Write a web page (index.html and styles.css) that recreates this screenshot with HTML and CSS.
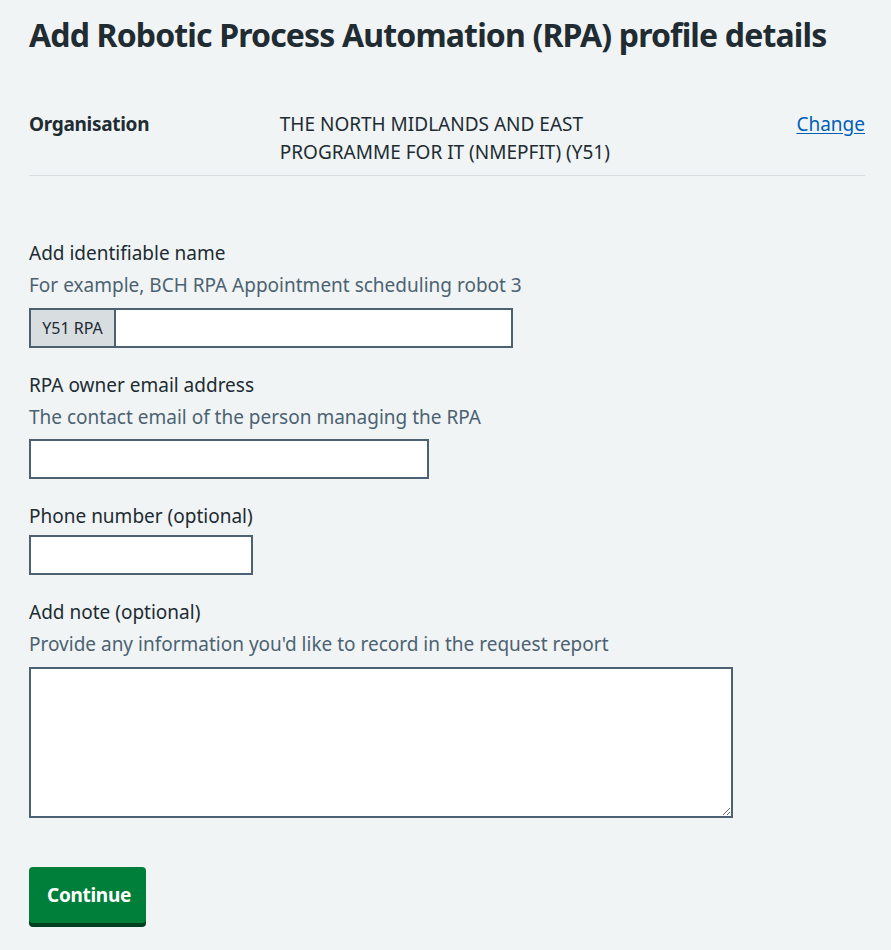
FILE: index.html
```html
<!DOCTYPE html>
<html lang="en">
<head>
<meta charset="utf-8">
<title>Add Robotic Process Automation (RPA) profile details</title>
<link rel="stylesheet" href="styles.css">
</head>
<body>
<main class="page">
  <h1 class="heading">Add Robotic Process Automation (RPA) profile details</h1>

  <dl class="summary">
    <div class="summary-row">
      <dt class="summary-key">Organisation</dt>
      <dd class="summary-value">THE NORTH MIDLANDS AND EAST PROGRAMME FOR IT (NMEPFIT) (Y51)</dd>
      <dd class="summary-actions"><a href="#" class="link">Change</a></dd>
    </div>
  </dl>

  <form class="form">
    <div class="form-group group-name">
      <label class="label" for="name">Add identifiable name</label>
      <div class="hint">For example, BCH RPA Appointment scheduling robot 3</div>
      <div class="prefix-wrap">
        <span class="prefix">Y51 RPA</span>
        <input class="input input-prefixed" id="name" type="text">
      </div>
    </div>

    <div class="form-group group-email">
      <label class="label" for="email">RPA owner email address</label>
      <div class="hint hint-tight">The contact email of the person managing the RPA</div>
      <input class="input input-email" id="email" type="email">
    </div>

    <div class="form-group">
      <label class="label label-tight" for="phone">Phone number (optional)</label>
      <input class="input input-phone" id="phone" type="tel">
    </div>

    <div class="form-group group-note">
      <label class="label" for="note">Add note (optional)</label>
      <div class="hint">Provide any information you'd like to record in the request report</div>
      <textarea class="textarea" id="note"></textarea>
    </div>

    <button type="button" class="button">Continue</button>
  </form>
</main>
</body>
</html>
```
FILE: styles.css
```css
html, body {
  margin: 0;
  padding: 0;
  background: #f0f4f5;
}
body {
  font-family: "Noto Sans", "Open Sans", Arial, sans-serif;
  color: #212b32;
  font-size: 19px;
  line-height: 28px;
}
.page {
  padding: 15px 26px 20px 29px;
}
.heading {
  margin: 0;
  font-size: 32px;
  line-height: 40px;
  font-weight: 700;
  letter-spacing: -0.85px;
}
.summary {
  margin: 43px 0 0 0;
  padding: 0;
}
.summary-row {
  display: flex;
  border-bottom: 1px solid #d8dde0;
  padding: 12px 0 9px 0;
}
.summary-key,
.summary-value,
.summary-actions {
  margin: 0;
}
.summary-key {
  width: 30%;
  font-weight: 700;
  letter-spacing: -0.3px;
}
.summary-value {
  width: 50%;
  padding-right: 24px;
  box-sizing: border-box;
}
.summary-actions {
  width: 20%;
  text-align: right;
}
.link {
  color: #005eb8;
  text-decoration: underline;
  text-underline-offset: 2px;
}
.form {
  margin-top: 63px;
}
.form-group {
  margin-bottom: 23px;
}
.group-name {
  margin-top: 1px;
}
.group-email {
  margin-bottom: 23px;
}
.group-note {
  margin-bottom: 49px;
}
.label {
  display: block;
  margin-bottom: 4px;
}
.label-tight {
  margin-bottom: 5px;
}
.hint {
  color: #4c6272;
  margin-bottom: 9px;
}
.hint-tight {
  margin-bottom: 8px;
}
.input,
.textarea {
  display: block;
  box-sizing: border-box;
  border: 2px solid #4c6272;
  border-radius: 0;
  background: #ffffff;
  font-family: inherit;
  font-size: 19px;
  margin: 0;
  padding: 4px;
}
.input {
  height: 40px;
}
.input-email {
  width: 400px;
}
.input-phone {
  width: 224px;
}
.prefix-wrap {
  display: flex;
}
.prefix {
  box-sizing: border-box;
  height: 40px;
  width: 85px;
  border: 2px solid #4c6272;
  border-right: none;
  background: #d8dde0;
  font-size: 16px;
  line-height: 36px;
  text-align: center;
}
.input-prefixed {
  width: 399px;
}
.textarea {
  width: 704px;
  height: 151px;
  resize: vertical;
}
.button {
  display: block;
  background: #007f3b;
  color: #ffffff;
  border: none;
  border-radius: 4px;
  box-shadow: 0 4px 0 #00401e;
  font-family: inherit;
  font-size: 19px;
  font-weight: 700;
  line-height: 28px;
  letter-spacing: -0.3px;
  padding: 14px 18px;
  width: 117px;
  height: 56px;
  cursor: pointer;
}
```
